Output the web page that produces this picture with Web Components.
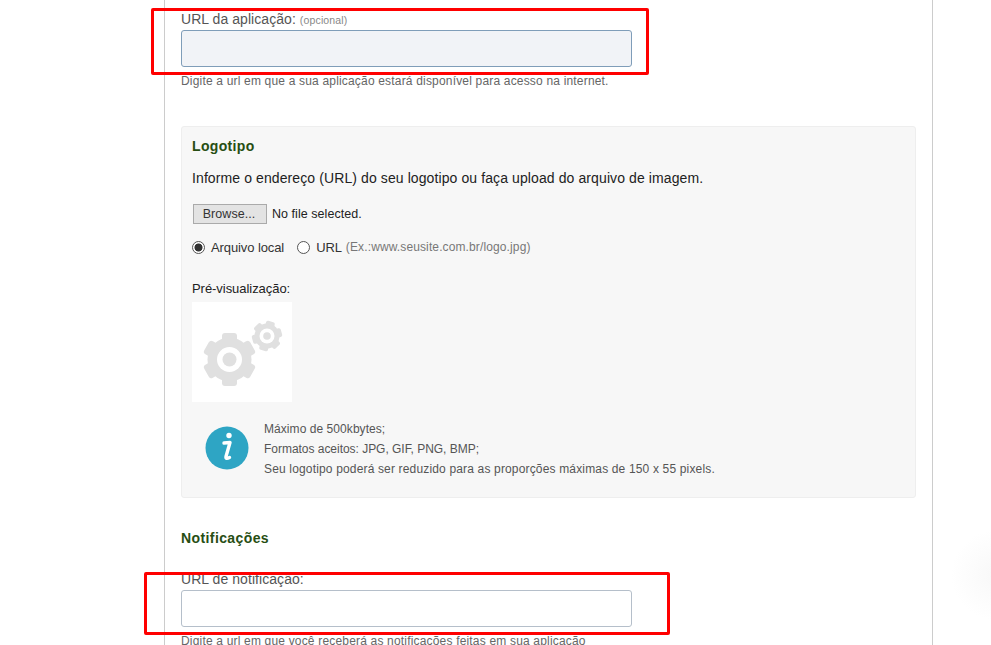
<!DOCTYPE html>
<html lang="pt-BR">
<head>
<meta charset="utf-8">
<title>Aplicação</title>
<style>
  html, body { margin: 0; height: 645px; overflow: hidden; background: #fff; }
  body { font-family: "Liberation Sans", Arial, sans-serif; }
</style>
</head>
<body>
<app-page>
  <form-panel>
    <url-field label="URL da aplicação:" optional="(opcional)" tone="filled" hint="Digite a url em que a sua aplicação estará disponível para acesso na internet."></url-field>
    <logo-box>
      <file-row></file-row>
    </logo-box>
    <section-title>Notificações</section-title>
    <url-field class="notify" label="URL de notificação:" hint="Digite a url em que você receberá as notificações feitas em sua aplicação"></url-field>
  </form-panel>
  <mark-box style="left:151px;top:8px;width:498px;height:67px"></mark-box>
  <mark-box style="left:144px;top:572px;width:526px;height:63px"></mark-box>
</app-page>

<script>
const pageTemplate = document.createElement('template');
pageTemplate.innerHTML = `
  <style>
    :host {
      display: block;
      position: relative;
      height: 645px;
      overflow: hidden;
    }
    .glow {
      position: absolute;
      right: -50px;
      top: 530px;
      width: 90px;
      height: 90px;
      border-radius: 50%;
      background: radial-gradient(closest-side, #f8f8f8, #fff);
    }
  </style>
  <div class="glow"></div>
  <slot></slot>
`;

class AppPage extends HTMLElement {
  constructor() {
    super();
    this.attachShadow({ mode: 'open' });
    this.shadowRoot.append(pageTemplate.content.cloneNode(true));
  }
}

const panelTemplate = document.createElement('template');
panelTemplate.innerHTML = `
  <style>
    :host {
      display: flex;
      flex-direction: column;
      box-sizing: border-box;
      width: 769px;
      height: 645px;
      margin-left: 164px;
      padding: 11px 16px 0;
      border-left: 1px solid #ccc;
      border-right: 1px solid #ccc;
      overflow: hidden;
    }
  </style>
  <slot></slot>
`;

class FormPanel extends HTMLElement {
  constructor() {
    super();
    this.attachShadow({ mode: 'open' });
    this.shadowRoot.append(panelTemplate.content.cloneNode(true));
  }
}

const fieldTemplate = document.createElement('template');
fieldTemplate.innerHTML = `
  <style>
    :host {
      display: block;
      flex: none;
    }
    label {
      display: block;
      height: 19px;
      font-size: 14px;
      line-height: 16px;
      letter-spacing: .06px;
      color: #555;
    }
    small {
      font-size: 10.5px;
      color: #888;
      letter-spacing: .15px;
    }
    .box {
      box-sizing: border-box;
      width: 451px;
      height: 37px;
      border: 1px solid #b5bfca;
      border-radius: 3px;
      background: #fff;
    }
    :host([tone="filled"]) .box {
      background: #f1f3f7;
      border-color: #7f9db9;
    }
    p {
      margin: 7px 0 0;
      font-size: 12px;
      line-height: 14px;
      letter-spacing: .18px;
      color: #666;
    }
  </style>
  <label><span class="text"></span> <small></small></label>
  <div class="box"></div>
  <p></p>
`;

class UrlField extends HTMLElement {
  constructor() {
    super();
    this.attachShadow({ mode: 'open' });
    this.shadowRoot.append(fieldTemplate.content.cloneNode(true));
  }

  connectedCallback() {
    this.shadowRoot.querySelector('.text').textContent = this.getAttribute('label');
    this.shadowRoot.querySelector('small').textContent = this.getAttribute('optional') || '';
    this.shadowRoot.querySelector('p').textContent = this.getAttribute('hint');
  }
}

const logoTemplate = document.createElement('template');
logoTemplate.innerHTML = `
  <style>
    :host {
      display: block;
      flex: none;
      box-sizing: border-box;
      height: 372px;
      margin-top: 38px;
      padding: 11px 10px 0;
      background: #f7f7f7;
      border: 1px solid #eee;
      border-radius: 3px;
      font-size: 14px;
    }
    h3 {
      margin: 0;
      font-size: 14px;
      line-height: 17px;
      letter-spacing: .35px;
      color: #274e13;
    }
    .lead {
      margin: 15px 0 0;
      line-height: 16px;
      letter-spacing: .1px;
      color: #222;
    }
    .choices {
      display: flex;
      align-items: center;
      height: 16px;
      margin-top: 15px;
      font-size: 13px;
      letter-spacing: -.1px;
      color: #333;
    }
    .radio {
      box-sizing: border-box;
      flex: none;
      width: 13px;
      height: 13px;
      margin-right: 6px;
      border: 1px solid #555;
      border-radius: 50%;
      background: #fff;
    }
    .radio.on {
      background: radial-gradient(circle, #333 3.6px, #fff 4.4px);
    }
    .second { margin-left: 13px; }
    .example {
      margin-left: 4px;
      font-size: 12px;
      letter-spacing: .12px;
      color: #777;
    }
    .preview-label {
      margin-top: 26px;
      font-size: 13px;
      line-height: 16px;
      letter-spacing: -.05px;
      color: #222;
    }
    .preview {
      display: block;
      width: 100px;
      height: 100px;
      margin-top: 5px;
      background: #fff;
    }
    .note {
      display: flex;
      align-items: flex-start;
      gap: 15px;
      margin: 17px 0 0 13px;
    }
    .note svg {
      flex: none;
      margin-top: 7px;
    }
    .note ul {
      margin: 0;
      padding: 0;
      list-style: none;
      font-size: 12px;
      line-height: 20px;
      letter-spacing: .16px;
      color: #555;
    }
    .note li:nth-child(1) { letter-spacing: .06px; }
    .note li:nth-child(2) { letter-spacing: -.03px; }
  </style>
  <h3>Logotipo</h3>
  <p class="lead">Informe o endereço (URL) do seu logotipo ou faça upload do arquivo de imagem.</p>
  <slot></slot>
  <div class="choices">
    <span class="radio on"></span><span>Arquivo local</span>
    <span class="radio second"></span><span>URL</span>
    <span class="example">(Ex.:www.seusite.com.br/logo.jpg)</span>
  </div>
  <div class="preview-label">Pré-visualização:</div>
  <svg class="preview" viewBox="0 0 100 100" aria-hidden="true">
    <g fill="#e0e0e0">
      <circle cx="37.5" cy="57.5" r="22"></circle>
      <rect x="30" y="31" width="15" height="53" rx="3"></rect>
      <rect x="30" y="31" width="15" height="53" rx="3" transform="rotate(60 37.5 57.5)"></rect>
      <rect x="30" y="31" width="15" height="53" rx="3" transform="rotate(120 37.5 57.5)"></rect>
      <circle cx="75" cy="34" r="12.5"></circle>
      <rect x="70.5" y="19" width="9" height="30" rx="2" transform="rotate(15 75 34)"></rect>
      <rect x="70.5" y="19" width="9" height="30" rx="2" transform="rotate(75 75 34)"></rect>
      <rect x="70.5" y="19" width="9" height="30" rx="2" transform="rotate(135 75 34)"></rect>
    </g>
    <circle cx="37.5" cy="57.5" r="12.5" fill="#fff"></circle>
    <circle cx="37.5" cy="57.5" r="7" fill="#e0e0e0"></circle>
    <circle cx="75" cy="34" r="7.5" fill="#fff"></circle>
    <circle cx="75" cy="34" r="3.8" fill="#e0e0e0"></circle>
  </svg>
  <div class="note">
    <svg width="44" height="44" viewBox="0 0 44 44" aria-hidden="true">
      <circle cx="22" cy="22" r="21.5" fill="#2ea5c4"></circle>
      <circle cx="24" cy="9.5" r="2.7" fill="#fff"></circle>
      <path d="M19 17 L25 16.5 L21 30.5 Q20.5 33.5 24.5 31.5" fill="none" stroke="#fff" stroke-width="3.4" stroke-linecap="round" stroke-linejoin="round"></path>
    </svg>
    <ul>
      <li>Máximo de 500kbytes;</li>
      <li>Formatos aceitos: JPG, GIF, PNG, BMP;</li>
      <li>Seu logotipo poderá ser reduzido para as proporções máximas de 150 x 55 pixels.</li>
    </ul>
  </div>
`;

class LogoBox extends HTMLElement {
  constructor() {
    super();
    this.attachShadow({ mode: 'open' });
    this.shadowRoot.append(logoTemplate.content.cloneNode(true));
  }
}

const fileTemplate = document.createElement('template');
fileTemplate.innerHTML = `
  <style>
    :host {
      display: flex;
      align-items: center;
      gap: 5px;
      height: 21px;
      margin-top: 17px;
      margin-left: 1px;
      font-size: 12.5px;
      letter-spacing: .05px;
      color: #222;
    }
    .browse {
      box-sizing: border-box;
      width: 74px;
      height: 20px;
      padding-right: 2px;
      font-size: 12.5px;
      line-height: 18px;
      text-align: center;
      background: #e3e3e3;
      border: 1px solid #aaa;
      color: #333;
    }
  </style>
  <span class="browse">Browse...</span>
  <span>No file selected.</span>
`;

class FileRow extends HTMLElement {
  constructor() {
    super();
    this.attachShadow({ mode: 'open' });
    this.shadowRoot.append(fileTemplate.content.cloneNode(true));
  }
}

const titleTemplate = document.createElement('template');
titleTemplate.innerHTML = `
  <style>
    :host {
      display: block;
      flex: none;
      height: 17px;
      margin-top: 32px;
      margin-bottom: 24px;
      font-size: 14px;
      font-weight: bold;
      line-height: 17px;
      letter-spacing: .4px;
      color: #274e13;
    }
  </style>
  <slot></slot>
`;

class SectionTitle extends HTMLElement {
  constructor() {
    super();
    this.attachShadow({ mode: 'open' });
    this.shadowRoot.append(titleTemplate.content.cloneNode(true));
  }
}

const markTemplate = document.createElement('template');
markTemplate.innerHTML = `
  <style>
    :host {
      display: block;
      position: absolute;
      box-sizing: border-box;
      border: 3px solid #f00;
      border-radius: 2px;
      pointer-events: none;
    }
  </style>
`;

class MarkBox extends HTMLElement {
  constructor() {
    super();
    this.attachShadow({ mode: 'open' });
    this.shadowRoot.append(markTemplate.content.cloneNode(true));
  }
}

customElements.define('app-page', AppPage);
customElements.define('form-panel', FormPanel);
customElements.define('url-field', UrlField);
customElements.define('logo-box', LogoBox);
customElements.define('file-row', FileRow);
customElements.define('section-title', SectionTitle);
customElements.define('mark-box', MarkBox);
</script>
</body>
</html>
